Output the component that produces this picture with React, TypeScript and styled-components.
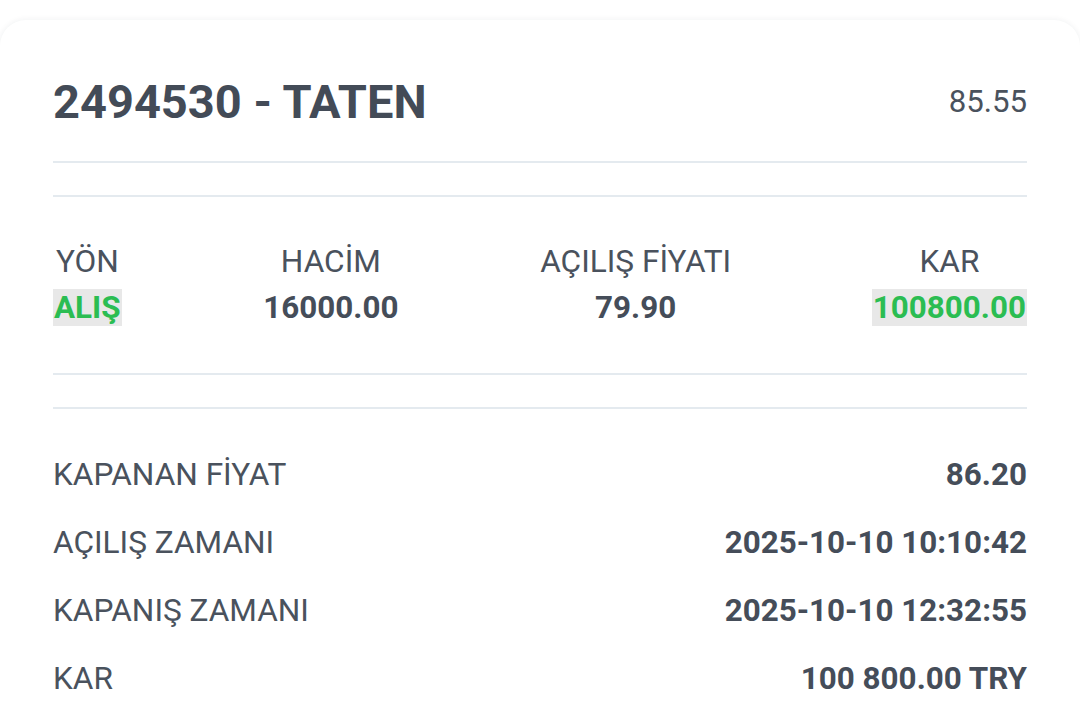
import React from "react";
import styled, { createGlobalStyle } from "styled-components";

const Global = createGlobalStyle`
  html, body { margin: 0; padding: 0; background: #ffffff; }
  body { font-family: Roboto, "Noto Sans", Arial, sans-serif; -webkit-font-smoothing: antialiased; }
  * { box-sizing: border-box; }
`;

const Page = styled.div`
  width: 1080px;
  height: 718px;
  overflow: hidden;
  padding-top: 20px;
  background: #ffffff;
`;

const Card = styled.div`
  background: #ffffff;
  border-radius: 26px 26px 0 0;
  box-shadow: 0 0 6px rgba(30, 40, 60, 0.07);
  padding: 53px 53px 0 53px;
  color: #454d59;
  min-height: 720px;
`;

const Header = styled.div`
  display: flex;
  justify-content: space-between;
  align-items: center;
  height: 58px;
`;

const Title = styled.h1`
  margin: 0;
  font-size: 47px;
  font-weight: 700;
  line-height: 58px;
  color: #434b57;
`;

const Price = styled.div`
  font-size: 31.2px;
  font-weight: 400;
  line-height: 58px;
  color: #4a525d;
`;

const DividerPair = styled.div<{ $top: number; $bottom: number }>`
  margin: ${(p) => p.$top}px 0 ${(p) => p.$bottom}px;
  display: flex;
  flex-direction: column;
  gap: 32px;
`;

const Line = styled.div`
  height: 2px;
  background: #e4eaef;
`;

const Stats = styled.div`
  display: flex;
  justify-content: space-between;
`;

const Stat = styled.div`
  display: flex;
  flex-direction: column;
  align-items: center;
  gap: 7px;
`;

const StatLabel = styled.div`
  font-size: 31.6px;
  line-height: 40px;
  font-weight: 400;
  color: #4a525d;
`;

const StatValue = styled.div<{ $green?: boolean; $hl?: boolean }>`
  font-size: 31.4px;
  line-height: 37px;
  font-weight: 700;
  color: ${(p) => (p.$green ? "#2bbd52" : "#454d59")};
  background: ${(p) => (p.$hl ? "#e8e8e8" : "transparent")};
  padding: 0 1px;
`;

const Rows = styled.div`
  display: flex;
  flex-direction: column;
`;

const Row = styled.div`
  display: flex;
  justify-content: space-between;
  align-items: center;
  height: 68px;
`;

const RowLabel = styled.div`
  font-size: 31.6px;
  font-weight: 400;
  color: #4a525d;
`;

const RowValue = styled.div`
  font-size: 31.4px;
  font-weight: 700;
  color: #454d59;
`;

const stats = [
  { label: "YÖN", value: "ALIŞ", green: true, hl: true },
  { label: "HACİM", value: "16000.00" },
  { label: "AÇILIŞ FİYATI", value: "79.90" },
  { label: "KAR", value: "100800.00", green: true, hl: true },
];

const rows = [
  { label: "KAPANAN FİYAT", value: "86.20" },
  { label: "AÇILIŞ ZAMANI", value: "2025-10-10 10:10:42" },
  { label: "KAPANIŞ ZAMANI", value: "2025-10-10 12:32:55" },
  { label: "KAR", value: "100 800.00 TRY" },
];

export default function App() {
  return (
    <>
      <Global />
      <Page>
        <Card>
          <Header>
            <Title>2494530 - TATEN</Title>
            <Price>85.55</Price>
          </Header>
          <DividerPair $top={30} $bottom={45}>
            <Line />
            <Line />
          </DividerPair>
          <Stats>
            {stats.map((s) => (
              <Stat key={s.label}>
                <StatLabel>{s.label}</StatLabel>
                <StatValue $green={s.green} $hl={s.hl}>
                  {s.value}
                </StatValue>
              </Stat>
            ))}
          </Stats>
          <DividerPair $top={47} $bottom={31}>
            <Line />
            <Line />
          </DividerPair>
          <Rows>
            {rows.map((r) => (
              <Row key={r.label}>
                <RowLabel>{r.label}</RowLabel>
                <RowValue>{r.value}</RowValue>
              </Row>
            ))}
          </Rows>
        </Card>
      </Page>
    </>
  );
}
